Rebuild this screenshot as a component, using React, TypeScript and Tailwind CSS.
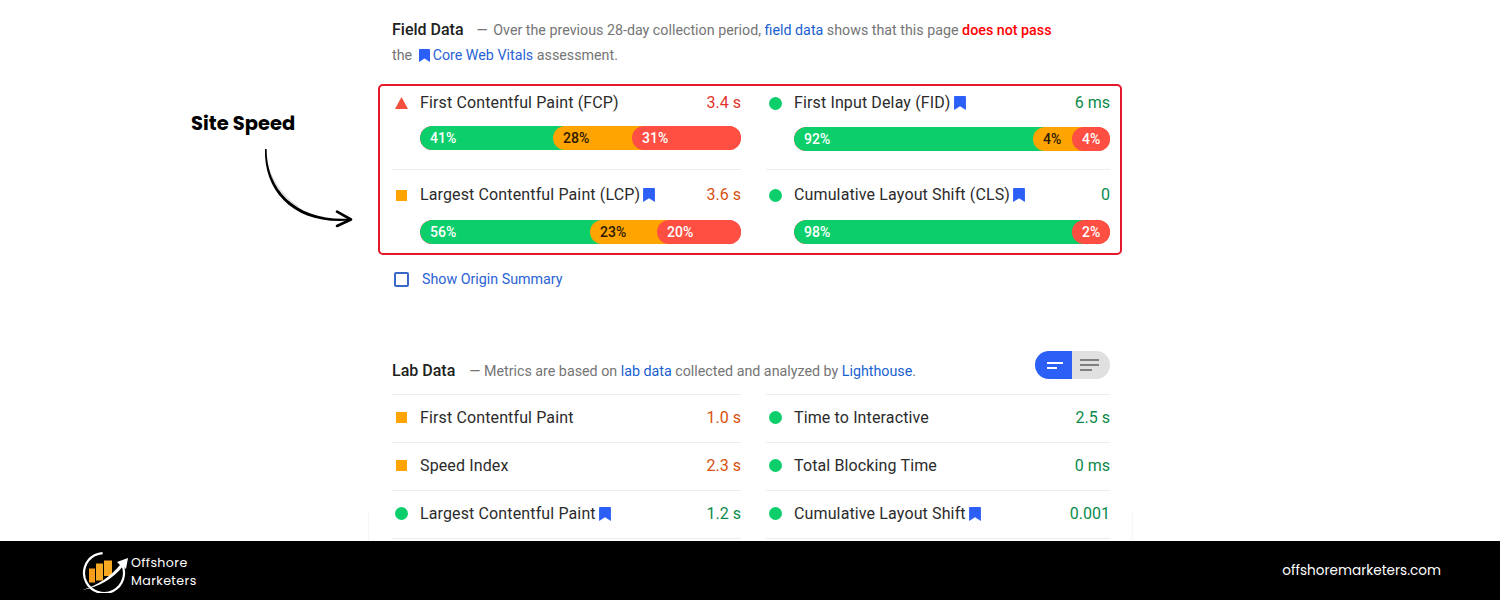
const RED = "text-[#e0342b]";
const ORG = "text-[#d8500f]";
const GRN = "text-[#0a8a4a]";

function Bookmark({ className = "" }: { className?: string }) {
  return (
    <svg viewBox="0 0 11 13" className={"shrink-0 " + className}>
      <path d="M0 0.8 Q0 0 0.8 0 H10.2 Q11 0 11 0.8 V13 L5.5 9.6 L0 13 Z" fill="#2b5ff5" />
    </svg>
  );
}

function Marker({ kind }: { kind: "tri" | "sq" | "dot" }) {
  return (
    <div className="w-[14px] h-[14px] flex items-center justify-center shrink-0">
      {kind === "tri" && (
        <svg viewBox="0 0 13 12" className="w-[13px] h-[12px]">
          <path d="M6.5 0 L13 12 H0 Z" fill="#f4503f" />
        </svg>
      )}
      {kind === "sq" && <div className="w-[11px] h-[11px] bg-[#ffa400]" />}
      {kind === "dot" && <div className="w-[13px] h-[13px] rounded-full bg-[#0ccf6b]" />}
    </div>
  );
}

type Seg = { g: number; o?: number; r: number; gl: string; ol?: string; rl: string };

function Bar({ g, o, gl, ol, rl }: Seg) {
  return (
    <div className="flex h-[24px] rounded-full overflow-hidden bg-[#ff4e42] text-[14px] font-medium leading-[24px]">
      <div className="bg-[#0ccf6b] text-white pl-[10px] rounded-l-full shrink-0" style={{ width: g + 12 }}>
        {gl}
      </div>
      {o !== undefined && (
        <div className="bg-[#ffa400] text-[#2a1a00] rounded-l-full -ml-[12px] pl-[10px] shrink-0" style={{ width: o + 12 }}>
          {ol}
        </div>
      )}
      <div className="bg-[#ff4e42] text-white rounded-l-full flex-1 pl-[10px] -ml-[12px]">{rl}</div>
    </div>
  );
}

type HeadProps = { kind: "tri" | "sq" | "dot"; label: string; book?: boolean; value: string; color: string };

function Head({ kind, label, book, value, color }: HeadProps) {
  return (
    <div className="flex items-center">
      <div className="w-[28px] pl-[2.5px] shrink-0">
        <Marker kind={kind} />
      </div>
      <span className="text-[#2b2b2b] text-[16px] leading-[20px] tracking-[0.13px]">{label}</span>
      {book && <Bookmark className="ml-[3px] w-[12px] h-[14px]" />}
      <span className={"ml-auto text-[16px] leading-[20px] " + color}>{value}</span>
    </div>
  );
}

function FieldCell({ head, bar, last, right }: { head: HeadProps; bar: Seg; last?: boolean; right?: boolean }) {
  return (
    <div className={last ? "pt-[15px]" : "h-[84px] pt-[7px] border-b border-[#ececec]"}>
      <Head {...head} />
      <div className={"pl-[28px] " + (last ? "mt-[15px]" : right ? "mt-[14px]" : "mt-[13px]")}>
        <Bar {...bar} />
      </div>
    </div>
  );
}

function LabCell({ head, top }: { head: HeadProps; top?: boolean }) {
  return (
    <div className={(top ? "h-[49px] border-t " : "h-[48px] ") + "flex flex-col justify-center pb-[2px] border-b border-[#ececec]"}>
      <Head {...head} />
    </div>
  );
}

function Logo() {
  return (
    <svg viewBox="0 0 48 44" className="w-[48px] h-[44px]">
      <circle cx="23" cy="24" r="20" fill="none" stroke="#fff" strokeWidth="2.2" strokeDasharray="102 24" transform="rotate(-28 23 24)" />
      <rect x="8" y="19.5" width="6" height="14" fill="#f59c1a" />
      <rect x="15" y="14.5" width="7" height="17" fill="#f7a823" />
      <rect x="23" y="11.5" width="8" height="15.5" fill="#f7a823" />
      <path d="M1 41 C16 37 30 27 39 16 L36 13 L47 9 L45 20 L42 17 C32 30 18 38 1 41 Z" fill="#fff" />
    </svg>
  );
}

export default function App() {
  return (
    <div className="w-[1500px] h-[600px] flex flex-col bg-white font-['Roboto',sans-serif] overflow-hidden">
      <div className="h-[541px] flex shrink-0 relative">
        <div className="absolute left-[368px] top-[512px] h-[29px] w-px bg-[#f6f6f6]" />
        <div className="absolute left-[1132px] top-[512px] h-[29px] w-px bg-[#f6f6f6]" />
        <div className="w-[378px] shrink-0 pl-[191px] pt-[111px]">
          <div className="font-['Poppins','Inter',sans-serif] font-bold text-[19.5px] leading-[26px] text-black">Site Speed</div>
          <svg viewBox="0 0 100 90" className="w-[100px] h-[90px] mt-[9px] ml-[64px]">
            <path d="M10 3 C8.5 46 40 79.5 95 74.6 L95 72.6 C42 75.5 11.6 45 11.6 3 Z" fill="#000" />
            <path d="M15.7 28 C22 42 32 54 44 61" fill="none" stroke="#999" strokeWidth="0.5" />
            <path d="M82 65.7 L96 73.5 L82 80" fill="none" stroke="#000" strokeWidth="2.6" strokeLinecap="round" strokeLinejoin="round" />
          </svg>
        </div>
        <div className="w-[744px] shrink-0">
          <div className="pl-[14px] pr-[50px] pt-[17px] text-[14.27px] leading-[25px] text-[#757575]">
            <span className="text-[#212121] font-medium text-[16px] mr-[13px]">Field Data</span><span className="mr-[2px]">—</span> Over the previous 28-day collection period, <span className="text-[#1a5fd0]">field data</span> shows that this page <span className="text-[#f00] font-medium">does not pass</span>
            <br />
            the <Bookmark className="inline-block align-[-2px] mx-[3px] w-[11px] h-[13px]" /><span className="text-[#2a63d4]">Core Web Vitals</span> assessment.
          </div>
          <div className="mt-[16px] h-[171px] border-2 border-[#e3182a] rounded-[5px] px-[12px] grid grid-cols-[349px_344px] gap-x-[25px] content-start">
            <FieldCell head={{ kind: "tri", label: "First Contentful Paint (FCP)", value: "3.4 s", color: RED }} bar={{ g: 133, o: 79, r: 109, gl: "41%", ol: "28%", rl: "31%" }} />
            <FieldCell right head={{ kind: "dot", label: "First Input Delay (FID)", book: true, value: "6 ms", color: GRN }} bar={{ g: 239, o: 39, r: 38, gl: "92%", ol: "4%", rl: "4%" }} />
            <FieldCell last head={{ kind: "sq", label: "Largest Contentful Paint (LCP)", book: true, value: "3.6 s", color: ORG }} bar={{ g: 170, o: 67, r: 84, gl: "56%", ol: "23%", rl: "20%" }} />
            <FieldCell last head={{ kind: "dot", label: "Cumulative Layout Shift (CLS)", book: true, value: "0", color: GRN }} bar={{ g: 278, r: 38, gl: "98%", rl: "2%" }} />
          </div>
          <div className="flex items-center pl-[16px] mt-[14px]">
            <div className="w-[15px] h-[15px] border-2 border-[#3a68c8] rounded-[2px]" />
            <span className="ml-[13px] text-[14.27px] leading-[20px] text-[#2a63d4]">Show Origin Summary</span>
          </div>
          <div className="pl-[14px] pr-[12px] mt-[62px] flex items-start h-[30px]">
            <span className="text-[#212121] font-medium text-[16px] leading-[20px] mt-[10px] mr-[14px]">Lab Data</span>
            <span className="text-[14.27px] leading-[20px] mt-[10px] text-[#757575]">— Metrics are based on <span className="text-[#1a5fd0]">lab data</span> collected and analyzed by <span className="text-[#1a5fd0]">Lighthouse</span>.</span>
            <div className="ml-auto flex h-[28px] w-[75px] rounded-full overflow-hidden">
              <div className="w-[37px] bg-[#2b5ff5] flex flex-col justify-center items-end pr-[9px] gap-[3px]">
                <div className="w-[16px] h-[2px] bg-white" />
                <div className="w-[10px] h-[2px] bg-white mr-[6px]" />
              </div>
              <div className="flex-1 bg-[#e0e0e0] flex flex-col justify-center pl-[8px] gap-[3px]">
                <div className="w-[19px] h-[2px] bg-[#808080]" />
                <div className="w-[19px] h-[2px] bg-[#808080]" />
                <div className="w-[12px] h-[2px] bg-[#808080]" />
              </div>
            </div>
          </div>
          <div className="px-[14px] grid grid-cols-[349px_344px] gap-x-[25px] mt-[13px]">
            <LabCell top head={{ kind: "sq", label: "First Contentful Paint", value: "1.0 s", color: ORG }} />
            <LabCell top head={{ kind: "dot", label: "Time to Interactive", value: "2.5 s", color: GRN }} />
            <LabCell head={{ kind: "sq", label: "Speed Index", value: "2.3 s", color: ORG }} />
            <LabCell head={{ kind: "dot", label: "Total Blocking Time", value: "0 ms", color: GRN }} />
            <LabCell head={{ kind: "dot", label: "Largest Contentful Paint", book: true, value: "1.2 s", color: GRN }} />
            <LabCell head={{ kind: "dot", label: "Cumulative Layout Shift", book: true, value: "0.001", color: GRN }} />
          </div>
        </div>
      </div>
      <div className="flex-1 bg-black flex items-center justify-between pl-[81px] pr-[59px]">
        <div className="flex items-center gap-[2px]">
          <Logo />
          <div className="text-white font-['Poppins','Inter',sans-serif] text-[12.6px] leading-[18px] tracking-[0.4px] pt-[2px]">
            <div>Offshore</div>
            <div>Marketers</div>
          </div>
        </div>
        <div className="text-white font-['Poppins','Inter',sans-serif] text-[13.6px] pt-[1px]">offshoremarketers.com</div>
      </div>
    </div>
  );
}
